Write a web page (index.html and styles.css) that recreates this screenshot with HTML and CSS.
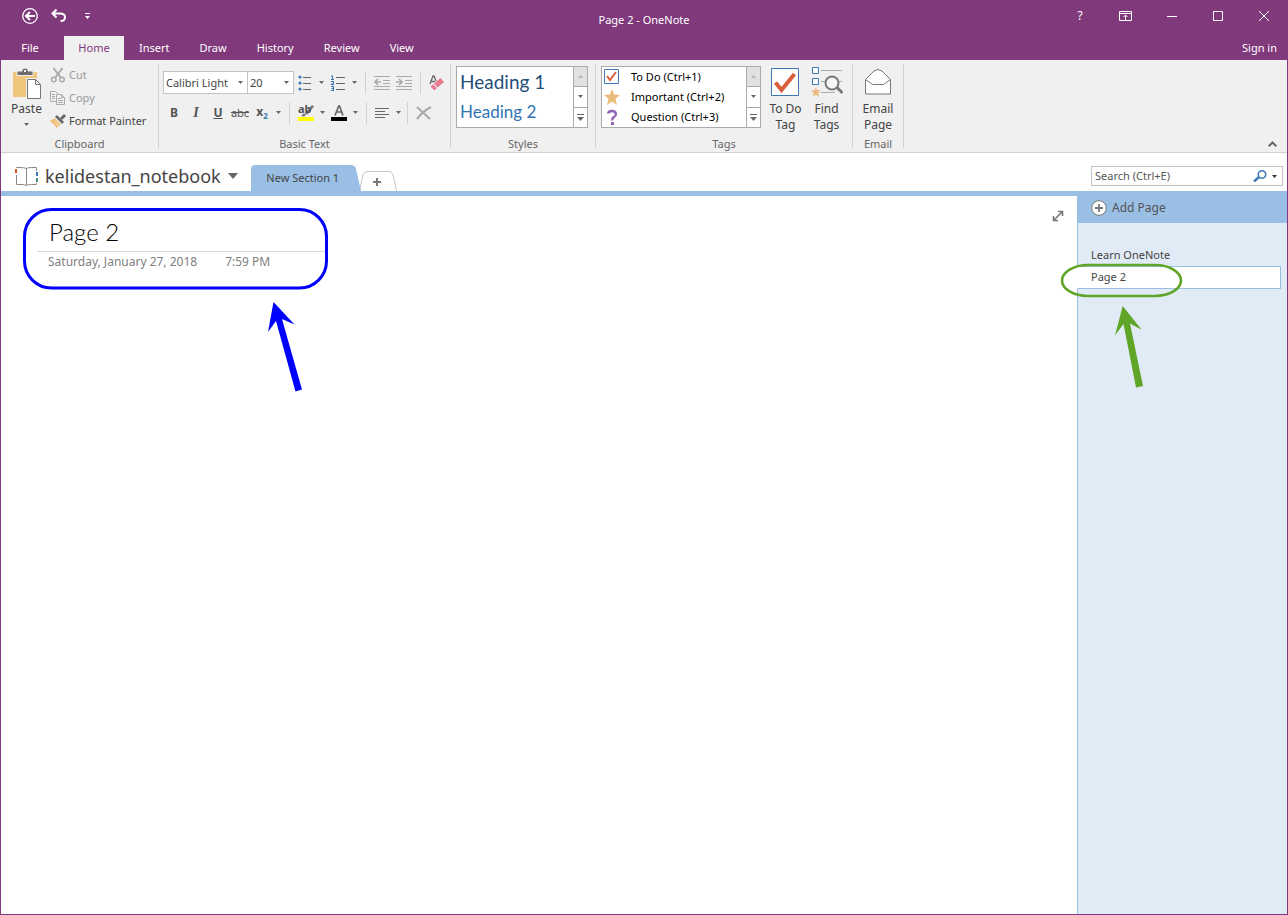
FILE: index.html
```html
<!DOCTYPE html>
<html lang="en">
<head>
<meta charset="utf-8">
<meta name="viewport" content="width=device-width, initial-scale=1">
<title>Page 2 - OneNote</title>
<link rel="stylesheet" href="styles.css">
</head>
<body>
<svg class="defs" aria-hidden="true">
  <symbol id="caret" viewBox="0 0 5 3"><path d="M0 0h5L2.500 3z" fill="currentColor"/></symbol>
  <symbol id="more" viewBox="0 0 7 7"><path d="M0 0h7v1H0zM0 3h7L3.500 7z" fill="currentColor"/></symbol>
</svg>
<div class="app">
  <header class="titlebar">
    <div class="quick">
      <button class="tool" aria-label="Back"><svg width="16" height="16" viewBox="0 0 16 16" fill="none" stroke="#fff"><circle cx="8" cy="8" r="7.300" stroke-width="1.300"/><path d="M13 8H4.500M8 4L4 8l4 4" stroke-width="2"/></svg></button>
      <button class="tool" aria-label="Undo"><svg width="16" height="14" viewBox="0 0 16 14" fill="none" stroke="#fff" stroke-width="2"><path d="M5.500 .500L1.500 4.500l4 4M2 4.500h7c3.500 0 5 1.500 5 3.700s-1.500 3.800-4.500 3.800"/></svg></button>
      <button class="tool" aria-label="Customize Quick Access Toolbar"><svg width="5" height="6" viewBox="0 0 5 6"><path d="M0 0h5v1H0zM0 3h5L2.500 6z" fill="#fff"/></svg></button>
    </div>
    <h1 class="title">Page 2 - OneNote</h1>
    <div class="window-tools">
      <button class="tool" aria-label="Help">?</button>
      <button class="tool" aria-label="Ribbon Display Options"><svg width="14" height="10" viewBox="0 0 14 10" fill="none" stroke="#fff"><path d="M.5.5h12v9H.5zM.5 2.500h12M6.500 9V4.500M4.500 6l2-2 2 2"/></svg></button>
      <button class="tool" aria-label="Minimize"><svg width="10" height="10" viewBox="0 0 10 10"><path d="M0 5h10v1H0z" fill="#fff"/></svg></button>
      <button class="tool" aria-label="Maximize"><svg width="10" height="10" viewBox="0 0 10 10" fill="none" stroke="#fff"><path d="M.5.5h9v9h-9z"/></svg></button>
      <button class="tool" aria-label="Close"><svg width="10" height="10" viewBox="0 0 10 10" stroke="#fff"><path d="M0 0l10 10M10 0L0 10"/></svg></button>
    </div>
  </header>

  <nav class="tabs">
    <button class="tab file">File</button>
    <button class="tab active">Home</button>
    <button class="tab">Insert</button>
    <button class="tab">Draw</button>
    <button class="tab">History</button>
    <button class="tab">Review</button>
    <button class="tab">View</button>
    <a class="signin" href="#">Sign in</a>
  </nav>

  <section class="ribbon">
    <div class="group clipboard">
      <div class="body">
        <button class="big paste">
          <svg width="29" height="31" viewBox="0 0 29 31"><path d="M1 4h24v25H1z" fill="#eec67c"/><path d="M5 7.500V3h5V2q0-2 3-2t3 2v1h5v4.500z" fill="#6b6b6b" stroke="#f0f0f0"/><path d="M12 2h2v2h-2z" fill="#f0f0f0"/><path d="M14 10h10l5 5v16H14z" fill="#f0f0f0"/><path d="M15.500 11.500h8l5 5v14h-13z" fill="#fff" stroke="#777"/><path d="M23.500 11.500v5h5" fill="none" stroke="#777"/></svg>
          <span>Paste</span>
          <svg class="caret"><use href="#caret"/></svg>
        </button>
        <div class="stack">
          <button class="command off"><svg width="16" height="16" viewBox="0 0 16 16" fill="none" stroke="#aaa"><path d="M3.500 1L11 11M12.500 1L5 11" stroke-width="2"/><circle cx="3.800" cy="12.500" r="2.300" stroke-width="1.400"/><circle cx="12" cy="12.500" r="2.300" stroke-width="1.400"/></svg>Cut</button>
          <button class="command off"><svg width="16" height="16" viewBox="0 0 16 16" fill="#f0f0f0" stroke="#aaa"><path d="M.5 1.500h5l2 2v8h-7z"/><path d="M2 4.500h3M2 6.500h3M2 8.500h3"/><path d="M6.500 4.500h5l3 3v7h-8z"/><path d="M11.500 4.500v3h3M8 8.500h3M8 10.500h5M8 12.500h5" fill="none"/></svg>Copy</button>
          <button class="command"><svg width="16" height="16" viewBox="0 0 16 16"><path d="M0 8l5-3 6 6-4 4z" fill="#eec07a"/><path d="M3 9l6 4M6 7l3 6" stroke="#f5dcae" stroke-width=".7"/><path d="M5 4l2-2 7 7-2 2z" fill="#666"/><path d="M10 5l4-4 2 2-4 4z" fill="#666"/><path d="M5.500 5l6 6" stroke="#f0f0f0"/></svg>Format Painter</button>
        </div>
      </div>
      <h2 class="caption">Clipboard</h2>
    </div>

    <div class="group basic">
      <div class="body rows">
        <div class="row">
          <span class="combo font"><select aria-label="Font"><option>Calibri Light</option></select><svg class="caret"><use href="#caret"/></svg></span>
          <span class="combo size"><select aria-label="Font size"><option>20</option></select><svg class="caret"><use href="#caret"/></svg></span>
          <button class="key" aria-label="Bullets"><svg width="14" height="16" viewBox="0 0 14 16"><g fill="#3f78b5"><circle cx="2" cy="2" r="1.600"/><circle cx="2" cy="8" r="1.600"/><circle cx="2" cy="14" r="1.600"/></g><path d="M5 2.500h8M5 8.500h8M5 14.500h8" stroke="#666"/></svg></button>
          <button class="drop" aria-label="Bullet options"><svg class="caret"><use href="#caret"/></svg></button>
          <button class="key" aria-label="Numbering"><svg width="16" height="16" viewBox="0 0 16 16"><path d="M1 1h1.500v4M1 4.500h3M1 6.500h2.500v1.500L1.500 9.500H4M1 11.500h2.500v4H1M1.500 13.500h2" fill="none" stroke="#3f78b5" stroke-width="1.100"/><path d="M6 2.500h9M6 8.500h9M6 14.500h9" stroke="#666"/></svg></button>
          <button class="drop" aria-label="Numbering options"><svg class="caret"><use href="#caret"/></svg></button>
          <span class="rule"></span>
          <button class="key" aria-label="Decrease indent"><svg width="16" height="14" viewBox="0 0 16 14" fill="none" stroke="#aaa"><path d="M0 .5h16M9 4.500h7M9 7.500h7M0 10.500h16M0 13.500h16"/><path d="M7 6H1.500M4 3L1 6l3 3" stroke-width="1.600"/></svg></button>
          <button class="key" aria-label="Increase indent"><svg width="16" height="14" viewBox="0 0 16 14" fill="none" stroke="#aaa"><path d="M0 .5h16M9 4.500h7M9 7.500h7M0 10.500h16M0 13.500h16"/><path d="M0 6h5.500M3 3l3 3-3 3" stroke-width="1.600"/></svg></button>
          <span class="rule"></span>
          <button class="key" aria-label="Clear formatting"><svg width="16" height="16" viewBox="0 0 16 16"><path d="M1 9L4 1h1l2 5M2 6.500h4" fill="none" stroke="#666" stroke-width="1.300"/><path d="M5 8.500L11.500 3 15 7l-6.500 5.500z" fill="#e8798f"/><path d="M1.500 11.500l2.800-2.300L7.800 13.200 5.500 15.500z" fill="#e8798f"/></svg></button>
        </div>
        <div class="row">
          <button class="key bold">B</button>
          <button class="key italic">I</button>
          <button class="key underline">U</button>
          <button class="key strike">abc</button>
          <button class="key bold" aria-label="Subscript"><span>x<sub>2</sub></span></button>
          <button class="drop" aria-label="Script options"><svg class="caret"><use href="#caret"/></svg></button>
          <span class="rule"></span>
          <button class="key ink" aria-label="Highlight"><span>ab</span><svg width="16" height="16" viewBox="0 0 16 16"><path d="M3 11l3-3 2 2-2 1.500zM7 8l7-8 2 1.500L9 10z" fill="#777"/><path d="M0 12h16v4H0z" fill="#ff0"/></svg></button>
          <button class="drop" aria-label="Highlight options"><svg class="caret"><use href="#caret"/></svg></button>
          <button class="key" aria-label="Font color"><svg width="16" height="16" viewBox="0 0 16 16"><path d="M4 10.500L7.700 1h.8L12 10.500M5.500 7h5.200" fill="none" stroke="#666" stroke-width="1.700"/><path d="M0 12h16v4H0z"/></svg></button>
          <button class="drop" aria-label="Font color options"><svg class="caret"><use href="#caret"/></svg></button>
          <span class="rule"></span>
          <button class="key" aria-label="Align"><svg width="16" height="10" viewBox="0 0 16 10" stroke="#666"><path d="M0 .5h14M0 3.500h10M0 6.500h14M0 9.500h10"/></svg></button>
          <button class="drop near" aria-label="Align options"><svg class="caret"><use href="#caret"/></svg></button>
          <span class="rule"></span>
          <button class="key" aria-label="Delete"><svg width="16" height="14" viewBox="0 0 16 14" stroke="#aaa" stroke-width="2.200" fill="none"><path d="M1 1l13 12M15 1C9 4 4 9 1 13"/></svg></button>
        </div>
      </div>
      <h2 class="caption">Basic Text</h2>
    </div>

    <div class="group styles">
      <div class="body">
        <div class="gallery">
          <div class="list">
            <button class="style one">Heading 1</button>
            <button class="style two">Heading 2</button>
          </div>
          <div class="scroller">
            <button class="dim" aria-label="Up" disabled><svg class="caret up"><use href="#caret"/></svg></button>
            <button aria-label="Down"><svg class="caret"><use href="#caret"/></svg></button>
            <button aria-label="More styles"><svg width="7" height="7"><use href="#more"/></svg></button>
          </div>
        </div>
      </div>
      <h2 class="caption">Styles</h2>
    </div>

    <div class="group tags">
      <div class="body">
        <div class="gallery">
          <div class="list">
            <button class="tag"><svg width="16" height="16" viewBox="0 0 16 16"><path d="M.5.5h14v14H.5z" fill="#fff" stroke="#3f78b5"/><path d="M3 7l3 4 6-8" fill="none" stroke="#d9603c" stroke-width="2"/></svg>To Do (Ctrl+1)</button>
            <button class="tag"><svg width="16" height="16" viewBox="0 0 16 16"><path d="M8 0l2.200 5.500 5.800.4-4.500 3.800L13 16l-5-3.400L3 16l1.500-6.300L0 5.900l5.800-.4z" fill="#e8bd7c"/></svg>Important (Ctrl+2)</button>
            <button class="tag"><svg width="16" height="16" viewBox="0 0 16 16"><path d="M4 4.500Q4.500 2 8 2t4 3q0 2-2 3T8.300 11.500" fill="none" stroke="#9463b5" stroke-width="2.300"/><path d="M7 13h3v3H7z" fill="#9463b5"/></svg>Question (Ctrl+3)</button>
          </div>
          <div class="scroller">
            <button class="dim" aria-label="Up" disabled><svg class="caret up"><use href="#caret"/></svg></button>
            <button aria-label="Down"><svg class="caret"><use href="#caret"/></svg></button>
            <button aria-label="More tags"><svg width="7" height="7"><use href="#more"/></svg></button>
          </div>
        </div>
        <button class="big"><svg width="32" height="32" viewBox="0 0 32 32"><path d="M1.500 2.500h27v27h-27z" fill="#fff" stroke="#3f78b5"/><path d="M5.500 16.500l6 7.500L24.500 8" fill="none" stroke="#d9603c" stroke-width="4"/></svg><span>To Do<br>Tag</span></button>
        <button class="big"><svg width="32" height="32" viewBox="0 0 32 32" fill="none"><path d="M1.500 1.500h6v6h-6zM1.500 12.500h6v6h-6z" fill="#fff" stroke="#3f78b5"/><path d="M10 4.500h21M10 15.500h4M26 15.500h5M10 26.500h14" stroke="#aaa"/><path d="M5 21l1.300 3.300 3.700.3-2.800 2.300L8 31l-3-2.200L2 31l.8-4.100L0 24.600l3.700-.3z" fill="#e8bd7c"/><circle cx="21" cy="17" r="6.500" fill="#f5f5f5" stroke="#777" stroke-width="2"/><path d="M26 21.500l5.500 5.500" stroke="#777" stroke-width="3"/></svg><span>Find<br>Tags</span></button>
      </div>
      <h2 class="caption">Tags</h2>
    </div>

    <div class="group email">
      <div class="body">
        <button class="big"><svg width="32" height="32" viewBox="0 0 32 32" fill="#fff" stroke="#777"><path d="M3.500 13.500L12 5q4-3 8 0l8.500 8.500v14.500h-25z"/><path d="M3.500 13.500l7 5h11l7-5" fill="none"/></svg><span>Email<br>Page</span></button>
      </div>
      <h2 class="caption">Email</h2>
    </div>
    <button class="collapse" aria-label="Collapse the Ribbon"><svg width="9" height="6" viewBox="0 0 9 6" fill="none" stroke="#666" stroke-width="2"><path d="M.7 5.300l3.800-3.800 3.800 3.800"/></svg></button>
  </section>

  <div class="notebar">
    <button class="notebook"><svg width="24" height="20" viewBox="0 0 24 20" fill="none" stroke="#888"><path d="M12.500 2.500Q10 1.500 6 1.500H2.500v17H7q4 0 5.500 1 1-1 5-1h5v-17h-5q-4 0-5 1zM12.500 2.500v16.500"/><path d="M1 2h3v7H1zM21 5h3v12h-3z" fill="#fff" stroke="none"/><path d="M1 3h2v4H1z" fill="#d9502c" stroke="none"/><path d="M22 6h2v4h-2z" fill="#3f78b5" stroke="none"/><path d="M22 12h2v4h-2z" fill="#4b9080" stroke="none"/></svg><span>kelidestan_notebook</span><svg width="10" height="6" viewBox="0 0 10 6"><path d="M0 0h10L5 6z" fill="#666"/></svg></button>
    <div class="sections">
      <button class="section"><svg class="shape" viewBox="0 0 110 27" preserveAspectRatio="none"><path d="M0 27V4q0-4 4-4h96q4 0 5 4l5 23z" fill="#9abfe4"/></svg><span>New Section 1</span></button>
      <button class="section-new" aria-label="Create a New Section"><svg width="38" height="20" viewBox="0 0 38 20" fill="none"><path d="M.5 19.500L4 4q1-3.500 4-3.500h22q3 0 4 3.500l3.500 15.500" stroke="#c6c6c6"/><path d="M14 11h8M18 7v8" stroke="#777" stroke-width="2"/></svg></button>
    </div>
    <form class="search">
      <input type="text" aria-label="Search" placeholder="Search (Ctrl+E)">
      <button type="button" aria-label="Search"><svg width="14" height="12" viewBox="0 0 14 12" fill="none" stroke="#3f78b5"><circle cx="9" cy="4.500" r="3.700" stroke-width="1.600"/><path d="M6 7l-5 4.500" stroke-width="2.400"/></svg></button>
      <button type="button" aria-label="Search scope"><svg class="caret"><use href="#caret"/></svg></button>
    </form>
  </div>

  <div class="workspace">
    <main class="page">
      <div class="note">
        <h2 class="note-title">Page 2</h2>
        <p class="stamp"><span>Saturday, January 27, 2018</span><span>7:59 PM</span></p>
      </div>
      <button class="expand" aria-label="Full page view"><svg width="12" height="12" viewBox="0 0 12 12" fill="none" stroke="#777" stroke-width="1.600"><path d="M6 1.500h4.500V6M1.500 6v4.500H6M10 2L2 10"/></svg></button>
      <svg class="mark mark-blue" width="310" height="200" viewBox="20 204 310 200"><rect x="24.500" y="209.500" width="302" height="78.500" rx="27" fill="none" stroke="#00f" stroke-width="3"/><path d="M273.500 302l21 22.500-12.500-5.500 20 70.500-6.500 2-19.500-70.500-8 11z" fill="#00f"/></svg>
    </main>
    <aside class="pages">
      <button class="add"><svg width="16" height="16" viewBox="0 0 16 16" fill="#fff" stroke="#777"><circle cx="8" cy="8" r="7.300"/><path d="M4 8h8M8 4v8" stroke-width="1.800"/></svg>Add Page</button>
      <ul class="page-list">
        <li><a href="#">Learn OneNote</a></li>
        <li class="current"><a href="#">Page 2</a></li>
      </ul>
      <svg class="mark mark-green" width="130" height="130" viewBox="1057 260 130 130"><rect x="1062" y="265" width="119" height="31" rx="26" ry="15.500" fill="none" stroke="#5fa527" stroke-width="2.600"/><path d="M1122.700 306l19 23.700-11.700-6.200 13 62.500-7 1.500-12.500-63.500-8.500 11.500z" fill="#5fa527"/></svg>
    </aside>
  </div>
</div>
</body>
</html>
```

FILE: styles.css
```css
* { box-sizing: border-box; }
body { margin: 0; font: 11px/16px "Noto Sans", "Open Sans", sans-serif; color: #444; }
button, select, input { font: inherit; color: inherit; margin: 0; padding: 0; border: 0; background: none; border-radius: 0; }
button { display: flex; align-items: center; justify-content: center; }
a { color: inherit; text-decoration: none; }
h1, h2, p, ul { margin: 0; padding: 0; font: inherit; list-style: none; }
svg { display: block; flex: none; }
.defs { position: absolute; width: 0; height: 0; }
.caret { width: 5px; height: 3px; color: #666; }
.caret.up { transform: rotate(180deg); }

.app { min-height: 100vh; display: flex; flex-direction: column; border: 1px solid #80397b; border-top: 0; background: #fff; }

.titlebar { display: grid; grid-template-columns: 1fr auto 1fr; height: 36px; background: #80397b; color: #fff; }
.quick { display: flex; align-items: flex-start; padding-left: 14px; }
.quick .tool { width: 29px; height: 32px; }
.title { align-self: center; padding-top: 3px; }
.window-tools { display: flex; justify-content: flex-end; }
.window-tools .tool { width: 46px; height: 32px; font-size: 12px; }

.tabs { display: flex; height: 24px; background: #80397b; color: #fff; }
.tab { padding: 0 15px; }
.tab.file { width: 63px; padding: 0 5px 0 0; }
.tab.active { width: 60px; padding: 0; background: #f0f0f0; color: #80397b; }
.signin { margin-left: auto; padding: 4px 10px; }

.ribbon { display: flex; height: 93px; padding: 4px 0; background: #f0f0f0; border-bottom: 1px solid #d2d2d2; }
.group { display: flex; flex-direction: column; border-right: 1px solid #d2d2d2; }
.body { flex: 1; display: flex; align-items: flex-start; padding: 2px 5px 0; }
.caption { text-align: center; color: #666; line-height: 8px; }
.clipboard { width: 158px; }
.basic { width: 292px; }
.styles { width: 145px; }
.tags { width: 257px; }
.email { width: 51px; }
.clipboard .body { padding: 0 5px; }
.styles .body { padding-right: 7px; }
.big { flex-direction: column; gap: 3px; width: 41px; text-align: center; font-size: 12px; }
.paste { gap: 2px; padding: 4px 0 0; }
.paste .caret { margin-top: 4px; }
.stack { display: flex; flex-direction: column; padding-left: 3px; margin-top: -1px; }
.command { justify-content: flex-start; gap: 3px; height: 23px; }
.off { color: #999; }
.rows { flex-direction: column; gap: 7px; padding: 7px 4px 0; }
.row { display: flex; align-items: center; height: 23px; }
.combo { position: relative; height: 23px; border: 1px solid #c3c3c3; background: #fff; }
.combo select { width: 100%; height: 100%; padding-left: 2px; appearance: none; }
.combo .caret { position: absolute; right: 4px; top: 9px; pointer-events: none; }
.font { width: 85px; }
.size { width: 47px; margin-left: -1px; }
.key { width: 22px; height: 22px; flex: none; color: #555; }
.drop { width: 11px; height: 22px; flex: none; }
.drop.near { width: 8px; }
.rule { width: 11px; height: 22px; flex: none; background: linear-gradient(#d2d2d2, #d2d2d2) center / 1px 100% no-repeat; }
.bold, .underline { font-weight: 700; font-size: 12px; }
.bold sub { font-size: 8px; line-height: 8px; color: #3f78b5; }
.italic { font: italic 700 14px "Liberation Serif", serif; }
.underline { text-decoration: underline; }
.strike { text-decoration: line-through; }
.ink { position: relative; font-weight: 700; }
.ink span { position: absolute; left: 3px; top: -1px; }

.gallery { display: flex; flex: 1; height: 62px; border: 1px solid #ababab; background: #fff; }
.tags .gallery { flex: none; width: 160px; margin-right: 4px; }
.list { flex: 1; display: flex; flex-direction: column; }
.scroller { display: flex; flex-direction: column; width: 14px; border-left: 1px solid #ababab; }
.scroller button { flex: 1; border-bottom: 1px solid #ababab; color: #666; }
.scroller button:last-child { border-bottom: 0; }
.scroller .dim { background: #e1e1e1; }
.dim .caret { color: #b5b5b5; }
.style { flex: 1; justify-content: flex-start; padding-left: 3px; font-family: Lato, sans-serif; }
.one { font-size: 19px; color: #1f4e79; }
.two { font-size: 17px; color: #2e75b5; }
.tag { flex: 1; justify-content: flex-start; gap: 11px; padding-left: 2px; color: #000; }
.collapse { margin-left: auto; align-self: flex-end; padding: 0 10px 1px; }

.notebar { display: flex; align-items: flex-end; height: 38px; padding: 0 4px 0 13px; }
.notebook { gap: 7px; height: 30px; font-size: 18px; }
.sections { display: flex; align-items: flex-end; padding-left: 13px; }
.section { position: relative; width: 110px; height: 26px; padding-right: 6px; }
.section .shape { position: absolute; inset: 0; width: 100%; height: 100%; }
.section span { position: relative; }
.section-new { margin-left: -2px; }
.search { display: flex; width: 192px; height: 20px; margin: 0 0 5px auto; border: 1px solid #c3c3c3; }
.search input { flex: 1; min-width: 0; padding: 0 3px; }
.search input::placeholder { color: #555; opacity: 1; }
.search button { width: 15px; }
.search .caret { color: #333; }

.workspace { flex: 1; display: flex; border-top: 5px solid #9abfe4; }
.page { position: relative; flex: 1; display: flex; justify-content: space-between; align-items: flex-start; padding: 14px 13px 0 36px; }
.note { width: 288px; }
.note-title { padding: 4px 12px 0; height: 42px; border-bottom: 1px solid #d8d8d8; font: 300 24px/36px Lato, sans-serif; color: #000; }
.stamp { display: flex; gap: 28px; padding: 2px 11px; font-size: 12px; color: #808080; }
.mark { position: absolute; pointer-events: none; }
.mark-blue { left: 19px; top: 8px; }
.pages { position: relative; width: 210px; background: #e1ebf6; border-left: 1px solid #9abfe4; }
.add { width: 100%; height: 27px; justify-content: flex-start; gap: 5px; padding: 0 13px 3px; background: #9abfe4; font-size: 12px; color: #555; }
.page-list { padding: 20px 6px 0 0; }
.page-list li { display: flex; align-items: center; height: 23px; padding-left: 13px; }
.page-list .current { margin-left: -1px; padding: 0 0 2px 13px; border: 1px solid #9abfe4; border-left: 1px solid #fff; background: #fff; }
.mark-green { left: -21px; top: 64px; }
```
